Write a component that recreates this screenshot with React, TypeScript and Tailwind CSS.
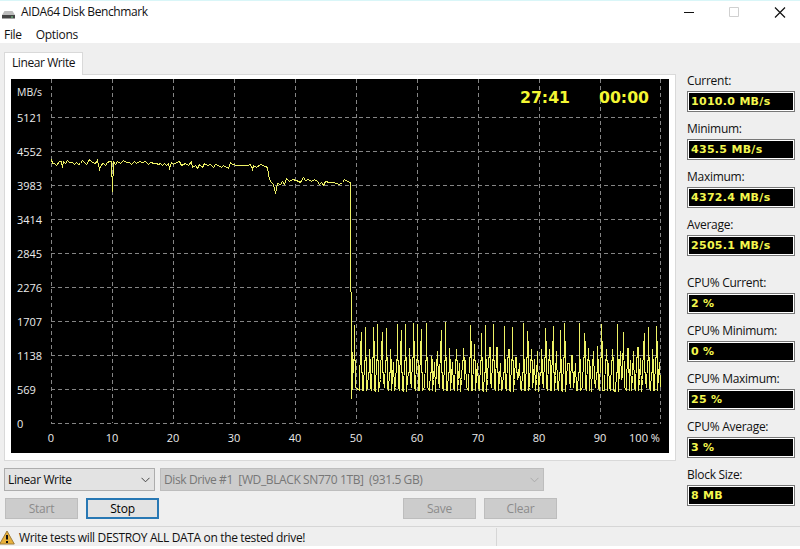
import { clsx } from 'clsx';

// Column positions of the vertical grid lines, in chart pixels
const GRID_X = [40.5, 101.5, 162.5, 223.5, 284.5, 345.5, 406.5, 467.5, 528.5, 589.5, 649.5];
const SPEEDS = [5121, 4552, 3983, 3414, 2845, 2276, 1707, 1138, 569, 0];
const PERCENTS = ['0', '10', '20', '30', '40', '50', '60', '70', '80', '90'];

// Cached part of the write: steady plateau, short dip, second plateau
const PLATEAU =
  '40,80 41,84 43,84 45,86 48,82 50,82 51,88 52,82 54,84 56,81 58,83 61,83 63,85 65,83 67,85 69,84 71,81 73,83 75,85 77,82 78,80 80,82 83,84 85,83 86,81 88,90 90,85 92,84 94,86 96,83 98,82 100,82 101,112 102,82 104,85 106,82 109,84 112,81 115,83 118,83 120,85 123,82 125,84 128,82 131,83 134,82 137,85 139,83 143,84 145,84 147,85 149,84 151,86 153,84 155,86 157,84 158,89 160,83 162,85 165,83 168,82 170,86 174,84 177,86 180,82 181,88 184,86 186,89 188,85 191,88 193,84 196,86 199,85 202,88 204,85 207,86 210,88 212,86 217,89 219,83 221,85 226,86 232,86 236,86 239,85 241,90 242,86 245,88 249,85 254,87 256,88 258,100 260,103 262,105 264,114 266,104 269,105 271,102 273,105 275,99 278,102 281,100 285,101 289,103 292,98 294,101 297,100 300,102 303,100 306,102 308,105 310,103 312,106 314,102 318,103 322,103 325,104 328,105 331,103 333,100 336,102 339,103 340,319 341,303 341,272';

// [x, top] of every burst after the cache has run out
const BURSTS = [
  [343, 245], [350, 252], [354, 247], [358, 269], [362, 247], [366, 244], [371, 252],
  [375, 248], [379, 269], [382, 283], [386, 244], [390, 250], [394, 244], [398, 268],
  [402, 243], [406, 244], [410, 249], [415, 243], [420, 276], [423, 283], [426, 272],
  [430, 250], [434, 242], [438, 268], [441, 283], [445, 269], [448, 284], [452, 268],
  [454, 281], [459, 245], [463, 264], [466, 284], [470, 253], [474, 245], [478, 268],
  [482, 244], [486, 268], [489, 284], [493, 246], [497, 270], [501, 247], [505, 278],
  [508, 284], [512, 243], [516, 251], [520, 269], [523, 280], [526, 272], [530, 269],
  [534, 248], [538, 269], [542, 246], [545, 272], [549, 250], [553, 243], [557, 284],
  [561, 276], [564, 284], [568, 243], [573, 253], [577, 268], [579, 287], [582, 272],
  [586, 266], [590, 244], [595, 269], [597, 284], [601, 269], [606, 244], [609, 272],
  [612, 253], [617, 269], [619, 281], [622, 272], [626, 268], [629, 279], [633, 253],
  [637, 247], [641, 269], [645, 246], [648, 283],
];

// Heights at which a burst widens, and the floors between bursts
const SHOULDERS = [280, 262, 281, 293, 278];
const FLOORS = [308, 311, 311, 308, 311, 312, 300];

function burstPoints() {
  return BURSTS.map(([x, top], i) => {
    const prev = i ? BURSTS[i - 1][0] : x - 4;
    const floor = FLOORS[i % FLOORS.length];
    const left = Math.max(top, SHOULDERS[i % SHOULDERS.length]);
    const right = Math.max(top, SHOULDERS[(i + 2) % SHOULDERS.length]);
    return x - prev > 3
      ? `${x - 2},${floor} ${x - 1},${left} ${x},${left} ${x},${top} ${x},${right} ${x + 1},${right} ${x + 1},${floor}`
      : `${x - 1},${floor - 12} ${x},${top} ${x + 1},${floor}`;
  }).join(' ');
}

function Chart() {
  return (
    <svg className="block h-[374px] w-[658px] bg-black" viewBox="0 0 658 374" shapeRendering="crispEdges">
      <g stroke="#858585" strokeWidth="1" strokeDasharray="4 3" fill="none">
        {GRID_X.map((x) => (
          <path key={x} d={`M${x} 0V344`} />
        ))}
        {SPEEDS.map((s, i) => (
          <path key={s} d={`M40 ${38.5 + i * 34}H650`} />
        ))}
      </g>
      <polyline
        points={`${PLATEAU} ${burstPoints()}`}
        transform="translate(.5 .5)"
        fill="none"
        stroke="#eef266"
        strokeWidth="1"
      />
      <g fill="#ececec" fontFamily="'Open Sans', sans-serif" fontSize="11">
        <text x="6" y="17" textLength="25" lengthAdjust="spacingAndGlyphs">MB/s</text>
        {SPEEDS.map((s, i) => (
          <text key={s} x="6" y={43 + i * 34}>{s}</text>
        ))}
        {PERCENTS.map((p, i) => (
          <text key={p} x={40 + i * 61} y="363" textAnchor="middle">{p}</text>
        ))}
        <text x="618" y="363" textLength="31" lengthAdjust="spacingAndGlyphs">100 %</text>
      </g>
      <g fill="#f4f733" fontFamily="'DejaVu Sans', sans-serif" fontSize="16" fontWeight="bold">
        <text x="509" y="24" textLength="50" lengthAdjust="spacingAndGlyphs">27:41</text>
        <text x="588" y="24" textLength="50" lengthAdjust="spacingAndGlyphs">00:00</text>
      </g>
    </svg>
  );
}

function Reading({ label, value }: { label: string; value: string }) {
  return (
    <div className="h-12">
      <div className="h-[18px] text-[12px] leading-[16px] tracking-[-0.28px]">{label}</div>
      <div className="h-[21px] w-[108px] border border-[#777] bg-white p-px">
        <div className="h-[17px] bg-black pl-[2px] font-['DejaVu_Sans',sans-serif] text-[11px] font-bold leading-[17px] tracking-[0.3px] text-[#f4f74e]">
          {value}
        </div>
      </div>
    </div>
  );
}

function Button({ label, active }: { label: string; active?: boolean }) {
  return (
    <button
      className={clsx(
        'h-[21px] w-[73px] text-[12px] leading-[17px] tracking-[-0.2px]',
        active ? 'border-2 border-[#2878b4] bg-[#e3e3e3] text-black' : 'border border-[#bdbdbd] bg-[#cccccc] text-[#8b8b8b]',
      )}
    >
      {label}
    </button>
  );
}

function Chevron({ color }: { color: string }) {
  return (
    <svg className="h-[6px] w-[9px]" viewBox="0 0 9 6" fill="none" stroke={color}>
      <path d="M.5.8 4.5 4.8 8.5.8" />
    </svg>
  );
}

export default function App() {
  return (
    <div className="flex h-[549px] w-[800px] flex-col overflow-hidden bg-white font-['Open_Sans',sans-serif] text-[12px] text-[#111]">
      {/* Title bar */}
      <div className="flex h-[25px] shrink-0 items-center border-t border-[#d9f6f8]">
        <svg className="ml-[2px] mt-[3px] h-[10px] w-[13px]" viewBox="0 0 13 10">
          <path d="M2.5 1h8L13 5H0z" fill="#bcbcbc" />
          <path d="M0 5h13v3.5H0z" fill="#444" />
          <path d="M9 7h2" stroke="#77d48b" />
        </svg>
        <span className="-mt-[2px] ml-[6px] tracking-[-0.39px]">AIDA64 Disk Benchmark</span>
        <svg className="-mt-px ml-auto mr-[14px] h-[11px] w-[102px]" viewBox="0 0 102 11" fill="none">
          <path d="M0 5.5h10" stroke="#111" />
          <path d="M45.5.5h9v9h-9z" stroke="#d0d0d0" />
          <path d="m91 .5 10 10m0-10-10 10" stroke="#111" strokeWidth="1.2" />
        </svg>
      </div>

      {/* Menu */}
      <div className="flex h-[18px] shrink-0 items-center gap-[14px] pl-1 pt-[2px] tracking-[-0.3px]">
        <span>File</span>
        <span>Options</span>
      </div>

      <div className="flex h-[503px] shrink-0 flex-col bg-[#efefef]">
        <div className="flex h-[418px] pl-1">
          <div className="w-[672px] pt-[9px]">
            <div className="relative z-10 -mb-px h-[23px] w-[79px] border border-b-0 border-[#d9d9d9] bg-white pl-[7px] leading-[20px] tracking-[-0.42px]">
              Linear Write
            </div>
            <div className="h-[387px] border border-[#d9d9d9] bg-white pl-[6px] pt-[4px]">
              <Chart />
            </div>
          </div>
          <div className="pl-[11px] pt-[30px]">
            <Reading label="Current:" value="1010.0 MB/s" />
            <Reading label="Minimum:" value="435.5 MB/s" />
            <Reading label="Maximum:" value="4372.4 MB/s" />
            <Reading label="Average:" value="2505.1 MB/s" />
            <div className="h-[10px]" />
            <Reading label="CPU% Current:" value="2 %" />
            <Reading label="CPU% Minimum:" value="0 %" />
            <Reading label="CPU% Maximum:" value="25 %" />
            <Reading label="CPU% Average:" value="3 %" />
            <Reading label="Block Size:" value="8 MB" />
          </div>
        </div>

        {/* Test and drive selection */}
        <div className="mt-[7px] flex h-[23px] w-[660px] gap-[5px] pl-1">
          <div className="flex w-[151px] items-center justify-between border border-[#adadad] bg-[#e3e3e3] pl-[3px] pr-[4px]">
            <span className="tracking-[-0.38px]">Linear Write</span>
            <Chevron color="#444" />
          </div>
          <div className="flex w-[384px] items-center justify-between border border-[#bdbdbd] bg-[#cccccc] pl-[3px] pr-[4px] text-[#777]">
            <span className="whitespace-pre tracking-[-0.39px]">{'Disk Drive #1  [WD_BLACK SN770 1TB]  (931.5 GB)'}</span>
            <Chevron color="#aaa" />
          </div>
        </div>
        <div className="mt-[7px] flex w-[560px] gap-2 pl-[5px]">
          <Button label="Start" />
          <Button label="Stop" active />
          <div className="ml-auto flex gap-2 pr-[3px]">
            <Button label="Save" />
            <Button label="Clear" />
          </div>
        </div>

        {/* Status bar */}
        <div className="mt-auto flex h-[20px] items-stretch border-t border-[#d6d6d6] pt-px">
          <div className="flex w-[497px] items-center border-r border-[#d6d6d6]">
            <svg className="h-[15px] w-[15px]" viewBox="0 0 15 15">
              <path d="M7 1 14.3 14H-.3z" fill="#e9b13b" stroke="#9d7c3d" strokeLinejoin="round" />
              <path d="M7 5v4.5M7 11v2" stroke="#111" strokeWidth="2" />
            </svg>
            <span className="ml-1 mt-[2px] tracking-[-0.35px]">Write tests will DESTROY ALL DATA on the tested drive!</span>
          </div>
        </div>
      </div>
    </div>
  );
}
